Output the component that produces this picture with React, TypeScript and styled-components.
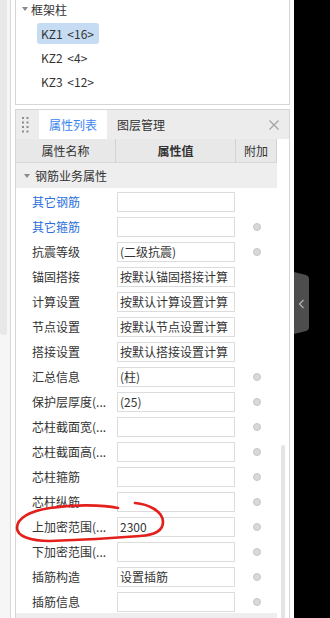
import React from "react";
import styled, { createGlobalStyle } from "styled-components";

const GlobalStyle = createGlobalStyle`
  html, body {
    margin: 0;
    padding: 0;
    background: #fff;
    overflow: hidden;
  }
  body {
    font-family: "Noto Sans CJK SC", "Noto Sans", sans-serif;
    font-size: 12px;
    color: #333;
  }
`;

interface PropRow {
  label: string;
  value?: string;
  blue?: boolean;
  dot?: boolean;
}

const rows: PropRow[] = [
  { label: "其它钢筋", blue: true },
  { label: "其它箍筋", blue: true, dot: true },
  { label: "抗震等级", value: "(二级抗震)", dot: true },
  { label: "锚固搭接", value: "按默认锚固搭接计算" },
  { label: "计算设置", value: "按默认计算设置计算" },
  { label: "节点设置", value: "按默认节点设置计算" },
  { label: "搭接设置", value: "按默认搭接设置计算" },
  { label: "汇总信息", value: "(柱)", dot: true },
  { label: "保护层厚度(...", value: "(25)", dot: true },
  { label: "芯柱截面宽(...", dot: true },
  { label: "芯柱截面高(...", dot: true },
  { label: "芯柱箍筋", dot: true },
  { label: "芯柱纵筋", dot: true },
  { label: "上加密范围(...", value: "2300", dot: true },
  { label: "下加密范围(...", dot: true },
  { label: "插筋构造", value: "设置插筋", dot: true },
  { label: "插筋信息", dot: true },
];

const treeItems = [
  { name: "KZ1", count: 16, selected: true },
  { name: "KZ2", count: 4 },
  { name: "KZ3", count: 12 },
];

const Page = styled.div`
  position: relative;
  display: flex;
  width: 330px;
  height: 618px;
  overflow: hidden;
`;

const LeftGutter = styled.div`
  width: 10px;
  flex-shrink: 0;
  background: #f6f6f6;
  border-right: 1px solid #d9d9d9;
`;

const GutterThumb = styled.div`
  width: 7px;
  height: 335px;
  background: #e8e8e8;
  border-radius: 0 0 3px 3px;
`;

const MainColumn = styled.div`
  width: 275px;
  flex-shrink: 0;
  padding: 0 4px;
  display: flex;
  flex-direction: column;
  gap: 4px;
  background: #fff;
`;

const TreePanel = styled.div`
  height: 104px;
  flex-shrink: 0;
  border: 1px solid #d6d6d6;
  border-top: none;
  padding-left: 6px;
  overflow: hidden;
`;

const TreeRoot = styled.div`
  display: flex;
  align-items: center;
  gap: 3px;
  height: 24px;
  margin-top: -3px;
`;

const TreeItem = styled.div`
  display: flex;
  align-items: center;
  height: 24px;
  padding-left: 15px;
`;

const ItemLabel = styled.span<{ $selected?: boolean }>`
  height: 21px;
  line-height: 21px;
  padding: 0 5px 0 4px;
  border-radius: 3px;
  white-space: pre;
  word-spacing: 2px;
  background: ${(p) => (p.$selected ? "#c6dcf2" : "transparent")};
`;

const PropsPanel = styled.div`
  flex: 1;
  border: 1px solid #d6d6d6;
  border-bottom: none;
  display: flex;
  flex-direction: column;
  overflow: hidden;
`;

const TabBar = styled.div`
  height: 29px;
  flex-shrink: 0;
  display: flex;
  align-items: stretch;
  background: #ececec;
  padding-left: 6px;
`;

const Grip = styled.div`
  display: flex;
  align-items: center;
  margin-right: 10px;
`;

const Tab = styled.div<{ $active?: boolean }>`
  display: flex;
  align-items: center;
  padding: 0 10px;
  background: ${(p) => (p.$active ? "#fff" : "transparent")};
  color: ${(p) => (p.$active ? "#3a86f0" : "#333")};
`;

const CloseBox = styled.div`
  margin-left: auto;
  margin-right: 10px;
  display: flex;
  align-items: center;
`;

const Body = styled.div`
  flex: 1;
  display: flex;
`;

const Table = styled.div`
  width: 261px;
  flex-shrink: 0;
`;

const ColHeader = styled.div`
  display: grid;
  grid-template-columns: 100px 120px 41px;
  height: 24px;
  background: #e8e8e8;
  border-bottom: 1px solid #d8d8d8;
  box-sizing: border-box;
`;

const HeadCell = styled.div<{ $bold?: boolean }>`
  display: flex;
  align-items: center;
  justify-content: center;
  border-right: 1px solid #d2d2d2;
  font-weight: ${(p) => (p.$bold ? 700 : 400)};
`;

const Category = styled.div`
  display: flex;
  align-items: center;
  gap: 5px;
  height: 25px;
  padding-left: 8px;
  background: #eeeeee;
`;

const Row = styled.div`
  display: grid;
  grid-template-columns: 100px 120px 41px;
  align-items: center;
  height: 25px;
  padding-top: 2px;
  box-sizing: border-box;
`;

const Label = styled.div<{ $blue?: boolean }>`
  padding-left: 16px;
  white-space: nowrap;
  overflow: hidden;
  color: ${(p) => (p.$blue ? "#2a6fdc" : "#333")};
`;

const ValueBox = styled.div`
  width: 118px;
  height: 20px;
  margin-left: 1px;
  box-sizing: border-box;
  border: 1px solid #dcdcdc;
  padding: 0 2px;
  line-height: 18px;
  white-space: nowrap;
  overflow: hidden;
`;

const Dot = styled.div`
  justify-self: center;
  width: 8px;
  height: 8px;
  border-radius: 50%;
  box-sizing: border-box;
  background: #d9d9d9;
  border: 1px solid #c6c6c6;
`;

const Track = styled.div`
  flex: 1;
  padding-left: 4px;
`;

const Thumb = styled.div`
  width: 4px;
  height: 200px;
  margin-top: 306px;
  background: #e4e4e4;
  border-radius: 2px;
`;

const DarkSide = styled.div`
  flex: 1;
  background: #000;
  padding-top: 272px;
`;

const Annotation = styled.svg`
  position: absolute;
  left: 0;
  top: 0;
  pointer-events: none;
`;

const Triangle = () => (
  <svg width="6" height="4" viewBox="0 0 6 4">
    <path d="M0 0 L6 0 L3 4 Z" fill="#8a8a8a" />
  </svg>
);

export default function App() {
  return (
    <>
      <GlobalStyle />
      <Page>
        <LeftGutter>
          <GutterThumb />
        </LeftGutter>
        <MainColumn>
          <TreePanel>
            <TreeRoot>
              <Triangle />
              <span>框架柱</span>
            </TreeRoot>
            {treeItems.map((t) => (
              <TreeItem key={t.name}>
                <ItemLabel $selected={t.selected}>{`${t.name} <${t.count}>`}</ItemLabel>
              </TreeItem>
            ))}
          </TreePanel>
          <PropsPanel>
            <TabBar>
              <Grip>
                <svg width="7" height="16" viewBox="0 0 7 16">
                  {[0, 1, 2, 3].map((r) =>
                    [0, 1].map((c) => (
                      <rect key={`${r}-${c}`} x={c * 4.5} y={r * 4.5} width="2" height="2" fill="#8c8c8c" />
                    ))
                  )}
                </svg>
              </Grip>
              <Tab $active>属性列表</Tab>
              <Tab>图层管理</Tab>
              <CloseBox>
                <svg width="10" height="10" viewBox="0 0 10 10">
                  <path d="M0.5 0.5 L9.5 9.5 M9.5 0.5 L0.5 9.5" stroke="#a3a3a3" strokeWidth="1.2" />
                </svg>
              </CloseBox>
            </TabBar>
            <Body>
              <Table>
                <ColHeader>
                  <HeadCell>属性名称</HeadCell>
                  <HeadCell $bold>属性值</HeadCell>
                  <HeadCell>附加</HeadCell>
                </ColHeader>
                <Category>
                  <Triangle />
                  <span>钢筋业务属性</span>
                </Category>
                {rows.map((r) => (
                  <Row key={r.label}>
                    <Label $blue={r.blue}>{r.label}</Label>
                    <ValueBox>{r.value}</ValueBox>
                    {r.dot ? <Dot /> : <span />}
                  </Row>
                ))}
                <Category />
              </Table>
              <Track>
                <Thumb />
              </Track>
            </Body>
          </PropsPanel>
        </MainColumn>
        <DarkSide>
          <svg width="16" height="62" viewBox="0 0 16 62">
            <path d="M0 0 L12 3 Q15 4 15 7 L15 55 Q15 58 12 59 L0 62 Z" fill="#4d4d4d" />
            <polyline points="9.5,28 5.5,32 9.5,36" fill="none" stroke="#b5b5b5" strokeWidth="1.2" />
          </svg>
        </DarkSide>
        <Annotation width="330" height="618" viewBox="0 0 330 618">
          <path
            d="M135 503 C148 504 163 511 163 522 C163 531 155 535 140 536 C115 538 80 540 50 541 C30 541 17 536 17 528 C17 518 30 511 50 508 C70 505 100 504 118 508"
            fill="none"
            stroke="#e3201c"
            strokeWidth="2.7"
            strokeLinecap="round"
          />
        </Annotation>
      </Page>
    </>
  );
}
